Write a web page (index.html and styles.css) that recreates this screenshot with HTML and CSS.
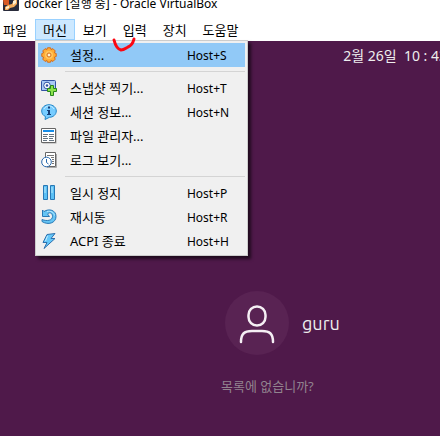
FILE: index.html
```html
<!DOCTYPE html>
<html lang="ko">
<head>
<meta charset="utf-8">
<title>docker [실행 중] - Oracle VirtualBox</title>
<link rel="stylesheet" href="styles.css">
</head>
<body>
<header class="titlebar">
  <svg class="app-icon" viewBox="0 0 16 16" aria-hidden="true">
    <rect width="16" height="16" rx="1" fill="#292b3b"/>
    <path d="M0 5h6v5H1z" fill="#d85b27"/>
    <path d="M14 5v4l-3 3-4 1-2 2H2v-3l3-2 4-1 2-4z" fill="#f6ad5c"/>
    <path d="M10 6l3-1v3l-3 2zM3 12l3-1v2l-3 1z" fill="#fff0d0"/>
  </svg>
  <span class="title">docker [실행 중] - Oracle VirtualBox</span>
</header>
<nav class="menubar">
  <button class="menu-title">파일</button>
  <div class="menu-host">
    <button class="menu-title open">머신</button>
    <div class="menu">
      <button class="item selected">
        <svg class="icon" viewBox="0 0 16 16" aria-hidden="true"><path d="M6.500.8h3l.5 1.700 2-.8 2.200 2.200-.8 1.900 1.800.7v3l-1.800.7.8 2-2.200 2.200-2-.9-.5 1.700h-3l-.6-1.700-1.900.9-2.200-2.200.8-2L.8 9.500v-3l1.800-.7-.8-1.900L4 1.700l1.900.8z" fill="#ffad35" stroke="#d66a16"/><circle cx="8" cy="8" r="4" fill="#ffc75f"/><circle cx="8" cy="8" r="2" fill="#fff3d0" stroke="#d66a16"/></svg>
        <span class="label">설정...</span><kbd>Host+S</kbd>
      </button>
      <hr>
      <button class="item">
        <svg class="icon" viewBox="0 0 16 16" aria-hidden="true"><path d="M1.500.5h12q1 0 1 1v9h-14v-9q0-1 1-1z" fill="#a9c9f5" stroke="#3152a4"/><circle cx="6" cy="5.500" r="3.300" fill="#fff" stroke="#3152a4"/><circle cx="6" cy="5.500" r="1.300" fill="#3152a4"/><path d="M9.500 5.500h3v3h3v3h-3v4h-3v-4h-3v-3h3z" fill="#8be34b" stroke="#27851d"/></svg>
        <span class="label">스냅샷 찍기...</span><kbd>Host+T</kbd>
      </button>
      <button class="item">
        <svg class="icon" viewBox="0 0 16 16" aria-hidden="true"><path d="M8 .7c4 0 7.300 2.700 7.300 6.300S12 13.300 8.500 13.300L4 15.500l.5-3C2 11.500.7 9.500.7 7 .7 3.400 4 .7 8 .7z" fill="#77ccff" stroke="#2486c7"/><path d="M3 5c2-4 8-4 10 0" fill="none" stroke="#c8eeff"/><path d="M7 2.500h2v2H7zM6 6h3v4h1v1H6v-1h1V7H6z" fill="#143f79"/></svg>
        <span class="label">세션 정보...</span><kbd>Host+N</kbd>
      </button>
      <button class="item">
        <svg class="icon" viewBox="0 0 16 16" aria-hidden="true"><path d="M1.500 1.500h14v14h-14z" fill="#aaa"/><path d="M.5.5h14v14H.5z" fill="#fff" stroke="#666"/><path d="M2 2h11v2H2z" fill="#168de8"/><path d="M2 6.500h5m1 0h5M2 8.500h4m2 0h5m-11 2h5m1 0h4m-10 2h4m2 0h5" stroke="#657482"/></svg>
        <span class="label">파일 관리자...</span>
      </button>
      <button class="item">
        <svg class="icon" viewBox="0 0 16 16" aria-hidden="true"><path d="M4.500.5h10v14h-10z" fill="#fff" stroke="#666"/><path d="M15.500 2v13.500H6" fill="none" stroke="#aaa"/><path d="M6 3.500h7m-3 2h3m-2 2h2m-2 2h2m-2 2h2" stroke="#777"/><circle cx="5.500" cy="10" r="4.800" fill="#fff" stroke="#2768ad"/><path d="M5.500 7v3.500l2 1.500" fill="none" stroke="#2768ad"/></svg>
        <span class="label">로그 보기...</span>
      </button>
      <hr>
      <button class="item">
        <svg class="icon" viewBox="0 0 16 16" aria-hidden="true"><path d="M2.500.5h4v14h-4zm7 0h4v14h-4z" fill="#5bc0f5" stroke="#2878b5"/><path d="M4 2v6m7-6v6" stroke="#b9eaff"/></svg>
        <span class="label">일시 정지</span><kbd>Host+P</kbd>
      </button>
      <button class="item">
        <svg class="icon" viewBox="0 0 16 16" aria-hidden="true"><path d="M3 2.500C8-.7 15 1 15 7.500S7 16.500 1 12.500L1 10.500c5 2 10.500 1 10.500-3S8 3 6.500 5l2 2.500H1.500V1z" fill="#65c5f5" stroke="#2878b5"/><path d="M6 2.500c4-1 7 1 7.500 4" fill="none" stroke="#b9eaff"/></svg>
        <span class="label">재시동</span><kbd>Host+R</kbd>
      </button>
      <button class="item">
        <svg class="icon" viewBox="0 0 16 16" aria-hidden="true"><path d="M6 1.500l8-1-4 5h4L3 15.500l3-6H2z" fill="#65c8fa" stroke="#2e70ad"/><path d="M6.500 3L4.500 8" stroke="#c5edff"/></svg>
        <span class="label">ACPI 종료</span><kbd>Host+H</kbd>
      </button>
    </div>
  </div>
  <button class="menu-title">보기</button>
  <div class="menu-host">
    <button class="menu-title">입력</button>
    <svg class="mark" viewBox="0 0 24 16" aria-hidden="true"><path d="M2 3c1 4 3 9 7 10 3 0 5-2 7-3 3-1 5-4 6-8" fill="none" stroke="#fb0712" stroke-width="3" stroke-linecap="round"/></svg>
  </div>
  <button class="menu-title">장치</button>
  <button class="menu-title">도움말</button>
</nav>
<main class="screen">
  <div class="clock"><time>2월 26일&nbsp; 10&nbsp;: 43</time></div>
  <section class="login">
    <button class="user">
      <svg class="avatar" viewBox="0 0 64 64" aria-hidden="true"><circle cx="32" cy="32" r="32" fill="#592353"/><g fill="none" stroke="#f5eff4" stroke-width="2.500" stroke-linecap="round"><rect x="23.500" y="15.500" width="17" height="19" rx="8.500"/><path d="M16 51c0-8 3-11 11-11h10c8 0 11 3 11 11"/></g></svg>
      <span class="name">guru</span>
    </button>
    <a class="other" href="#">목록에 없습니까?</a>
  </section>
</main>
</body>
</html>
```
FILE: styles.css
```css
* { box-sizing: border-box; }
body {
  margin: 0;
  min-height: 100vh;
  display: flex;
  flex-direction: column;
  overflow: hidden;
  background: #fff;
  color: #000;
  font: 12px/16px "Noto Sans", "Noto Sans CJK KR", sans-serif;
}
button { margin: 0; border: 0; padding: 0; background: none; color: inherit; font: inherit; }
.titlebar {
  display: flex;
  gap: 5px;
  height: 19px;
  padding-left: 3px;
}
.app-icon { width: 16px; height: 16px; margin-top: -5px; }
.title { margin-top: -4px; white-space: nowrap; }
.menubar { display: flex; height: 22px; margin-left: -5px; }
.menu-host { position: relative; }
.menu-title {
  height: 21px;
  padding: 0 7px;
  border: 1px solid transparent;
  font-size: 13px;
  line-height: 16px;
  white-space: nowrap;
}
.menu-title.open { background: #cce8ff; border-color: #99d1ff; }
.menu {
  position: absolute;
  z-index: 1;
  top: 21px;
  left: 0;
  width: 213px;
  padding: 2px;
  border: 1px solid #ccc;
  background: #f0f0f0;
  box-shadow: 3px 3px 3px #0009;
}
.item {
  display: flex;
  align-items: center;
  width: 100%;
  height: 24px;
  padding-left: 3px;
  text-align: left;
}
.selected { background: #91c9f7; }
.icon { width: 16px; height: 16px; margin-right: 13px; }
.label { flex: 1; font-size: 13px; white-space: nowrap; }
kbd { width: 58px; padding-top: 2px; font: inherit; }
.menu hr { margin: 4px 0 4px 27px; border: 0; border-top: 1px solid #d4d4d4; }
.mark { position: absolute; z-index: 2; top: 18px; left: -3px; width: 24px; height: 16px; }
.screen { flex: 1; background: #4f194a; color: #eee; }
.clock {
  display: flex;
  justify-content: flex-end;
  margin-right: -7px;
  padding-top: 5px;
  font-size: 14px;
  line-height: 20px;
  white-space: pre;
}
.login {
  display: flex;
  flex-direction: column;
  align-items: flex-start;
  margin: 225px 0 0 50%;
}
.user { display: flex; align-items: center; gap: 13px; margin-left: 5px; font-family: Ubuntu, "Noto Sans", sans-serif; font-size: 18px; line-height: 20px; }
.avatar { width: 64px; height: 64px; }
.other { margin: 22px 0 0 1px; color: #92838f; font-size: 13px; line-height: 18px; text-decoration: none; }
```
